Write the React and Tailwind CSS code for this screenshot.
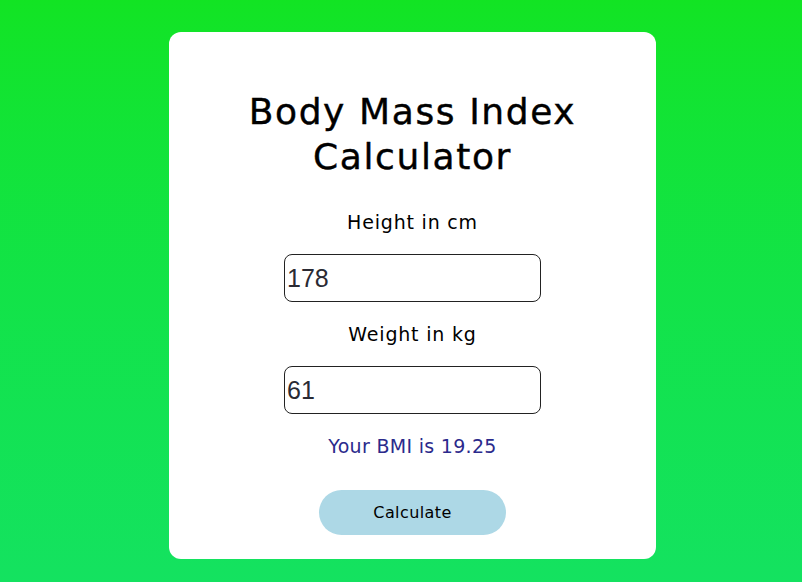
import React, { useState } from "react";

const App = () => {
  const [height, setHeight] = useState("178");
  const [weight, setWeight] = useState("61");
  const [bmi, setBmi] = useState("19.25");

  const onCalculate = () => {
    const h = parseFloat(height) / 100;
    const w = parseFloat(weight);
    if (h > 0 && w > 0) setBmi((w / (h * h)).toFixed(2));
  };

  return (
    <div className="min-h-screen w-full flex justify-center pt-[32px] pl-[23px] bg-gradient-to-b from-[#12e423] to-[#14e260] font-['DejaVu_Sans',sans-serif]">
      <div className="w-[487px] h-[527px] bg-white rounded-[12px] flex flex-col items-center pt-[57px]">
        <h1 className="text-[36px] leading-[45px] text-black text-center w-[360px] tracking-[1.6px] [-webkit-text-stroke:0.4px_black]">
          Body Mass Index Calculator
        </h1>
        <label className="mt-[32px] text-[19px] leading-[22px] text-black tracking-[0.8px]">
          Height in cm
        </label>
        <input
          value={height}
          onChange={(e) => setHeight(e.target.value)}
          className="mt-[21px] w-[257px] h-[48px] border border-[#222] rounded-[8px] px-[2px] text-[25px] text-[#2a2a33] font-['Liberation_Sans',Arial,sans-serif] outline-none"
        />
        <label className="mt-[21px] text-[19px] leading-[22px] text-black tracking-[0.8px]">
          Weight in kg
        </label>
        <input
          value={weight}
          onChange={(e) => setWeight(e.target.value)}
          className="mt-[21px] w-[257px] h-[48px] border border-[#222] rounded-[8px] px-[2px] text-[25px] text-[#2a2a33] font-['Liberation_Sans',Arial,sans-serif] outline-none"
        />
        <p className="mt-[21px] text-[19px] leading-[22px] text-[#2b2a8c] tracking-[0.3px]">
          Your BMI is {bmi}
        </p>
        <button
          onClick={onCalculate}
          className="mt-[33px] w-[187px] h-[45px] rounded-full bg-[#add8e6] text-[16px] text-black tracking-[0.4px]"
        >
          Calculate
        </button>
      </div>
    </div>
  );
};

export default App;
